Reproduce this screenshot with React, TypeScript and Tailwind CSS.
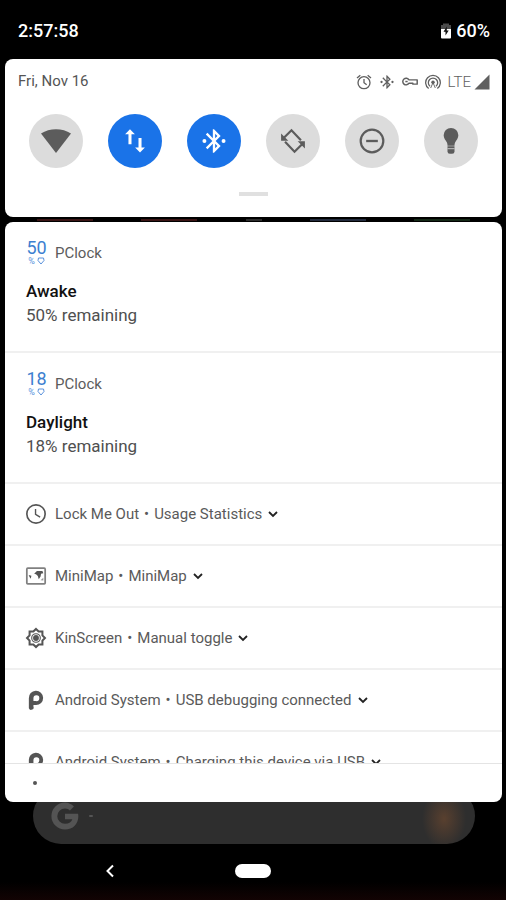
import React from "react";

type IconProps = { className?: string };

function Svg({ className = "", children, box = "0 0 24 24" }: IconProps & { children: React.ReactNode; box?: string }) {
  return (
    <svg viewBox={box} className={`shrink-0 ${className}`} fill="currentColor" aria-hidden="true">
      {children}
    </svg>
  );
}

const stroke = { fill: "none", stroke: "currentColor" } as const;

const BLUETOOTH =
  "M14.88 16.29 13 18.17v-3.76l1.88 1.88M13 5.83l1.88 1.88L13 9.59V5.83m4.71 1.88L12 2h-1v7.59L6.41 5 5 6.41 10.59 12 5 17.59 6.41 19 11 14.41V22h1l5.71-5.71-4.3-4.29 4.3-4.29";

function WifiIcon() {
  return (
    <Svg className="h-8 w-8" box="0 0 32 32">
      <path d="M1 8.500C9.500 2.700 22.500 2.700 31 8.500L16 28z" />
    </Svg>
  );
}

function DataIcon() {
  return (
    <Svg className="h-7 w-7">
      <path d="M7.700 2 3.500 6.300h2.900v8.500H9V6.300h2.900zM16.300 21.800l4.200-4.300h-2.900V9.500H15v8h-2.900z" />
    </Svg>
  );
}

function BluetoothIcon({ className = "" }: IconProps) {
  return (
    <Svg className={className}>
      <path d={BLUETOOTH} />
      <circle cx="3.800" cy="12" r="1.700" />
      <circle cx="20.200" cy="12" r="1.700" />
    </Svg>
  );
}

function RotateIcon() {
  return (
    <Svg className="h-7 w-7">
      <g {...stroke} strokeWidth="1.900">
        <path d="M18.800 11.300 10.700 2.800 4 9.500" />
        <path d="M5.200 12.700 13.300 21.200 20 14.500" />
      </g>
      <path d="M1.800 5.500v6.200H8zM22.200 18.500v-6.200H16z" />
    </Svg>
  );
}

function DndIcon() {
  return (
    <Svg className="h-7 w-7">
      <circle cx="12" cy="12" r="9.700" {...stroke} strokeWidth="1.900" />
      <path d="M7 11h10v2H7z" />
    </Svg>
  );
}

function BulbIcon() {
  return (
    <Svg className="h-7 w-7">
      <path d="M12 0.800a6.300 6.300 0 0 0-6.300 6.300c0 2.600 1.700 4.300 2.800 6.100.4.700.5 1.600.5 2.800h6c0-1.200.1-2.100.5-2.800 1.100-1.800 2.800-3.500 2.800-6.100A6.300 6.300 0 0 0 12 .8z" />
      <path d="M9 16.500h6V21a2 2 0 0 1-2 2h-2a2 2 0 0 1-2-2z" />
      <path d="M9 18.600h6" stroke="#dcdcdc" strokeWidth=".7" />
    </Svg>
  );
}

function BatteryIcon() {
  return (
    <Svg className="h-4 w-4" box="0 0 16 16">
      <path d="M5 0.500h6V2h2v4H3V2h2z" fill="#4b4b4b" />
      <path d="M3 6h10v8.500a1 1 0 0 1-1 1H4a1 1 0 0 1-1-1z" />
      <path d="M8.800 3.500 5.500 8.700h2v3.800l3.200-5H8.800z" fill="#111" />
    </Svg>
  );
}

function AlarmIcon() {
  return (
    <Svg className="h-4 w-4">
      <g {...stroke} strokeWidth="2">
        <circle cx="12" cy="13" r="9" />
        <path d="M12 7.500V13l4 3M1.500 6 6.500 1.700M22.500 6l-5-4.300" />
      </g>
    </Svg>
  );
}

function KeyIcon() {
  return (
    <Svg className="h-4 w-4">
      <g {...stroke} strokeWidth="2.200" strokeLinejoin="round">
        <path d="M10.500 8.800H22.800v6.400h-6.500v-1.400h-5.800a5 5 0 1 1 0-5z" />
        <path d="M5 11.300h3.500" />
      </g>
    </Svg>
  );
}

function HotspotIcon() {
  return (
    <Svg className="h-4 w-4">
      <g {...stroke} strokeWidth="1.900">
        <path d="M5.500 21.800A11 11 0 1 1 18.500 21.800" />
        <path d="M7.500 18.500a7 7 0 1 1 9 0" />
        <path d="M8.500 21 12 13l3.500 8" strokeWidth="1.400" />
      </g>
      <circle cx="12" cy="12.500" r="2.600" />
    </Svg>
  );
}

function SignalIcon() {
  return (
    <Svg className="h-4 w-4" box="0 0 16 16">
      <path d="M15.500 0.500v15H.5z" />
    </Svg>
  );
}

function ClockIcon() {
  return (
    <Svg className="h-[22px] w-[22px]">
      <g {...stroke}>
        <circle cx="12" cy="12" r="10" strokeWidth="1.800" />
        <path d="M11.500 6.500V12.500l5 3" strokeWidth="1.500" />
      </g>
    </Svg>
  );
}

function MapIcon() {
  return (
    <Svg className="h-[22px] w-[22px]">
      <rect x="2" y="3.500" width="20" height="17" rx="1" {...stroke} strokeWidth="1.900" opacity=".75" />
      <path d="M10 9.500 13 6.500h6l1 2.500-2.500.5-.5 3-2 3-1-3.500-2-2zM4 11l3 .8-.8 3.200-1.200-2z" />
      <path d="M17 16.500 20 14v3z" opacity=".6" />
    </Svg>
  );
}

function BrightnessIcon() {
  return (
    <Svg className="h-[22px] w-[22px]">
      <path
        d="M12 2.200 14.900 5h4.100v4.100L21.800 12 19 14.900V19h-4.100L12 21.800 9.100 19H5v-4.100L2.200 12 5 9.100V5h4.100z"
        {...stroke}
        strokeWidth="2.200"
      />
      <circle cx="12" cy="12" r="4.700" {...stroke} strokeWidth="1.200" />
      <circle cx="12" cy="12" r="3.200" />
    </Svg>
  );
}

function PieIcon() {
  return (
    <Svg className="h-[22px] w-[22px]">
      <path
        fillRule="evenodd"
        d="M4.200 10.200a7.800 7.800 0 1 1 7.800 7.300H9.200V19a2.500 2.500 0 0 1-5 2zM9.200 13.200h2.800a3.200 3.200 0 1 0-2.800-3.200z"
      />
    </Svg>
  );
}

function ChevronDown() {
  return (
    <Svg className="ml-[3px] h-4 w-4 text-[#222]" box="0 0 16 16">
      <path d="M4 6l4 4 4-4" {...stroke} strokeWidth="1.800" />
    </Svg>
  );
}

const tiles = [
  { label: "Wi-Fi", on: false, icon: <WifiIcon /> },
  { label: "Mobile data", on: true, icon: <DataIcon /> },
  { label: "Bluetooth", on: true, icon: <BluetoothIcon className="h-7 w-7" /> },
  { label: "Auto-rotate", on: false, icon: <RotateIcon /> },
  { label: "Do not disturb", on: false, icon: <DndIcon /> },
  { label: "Flashlight", on: false, icon: <BulbIcon /> },
];

const rows = [
  { app: "Lock Me Out", text: "Usage Statistics", icon: <ClockIcon /> },
  { app: "MiniMap", text: "MiniMap", icon: <MapIcon /> },
  { app: "KinScreen", text: "Manual toggle", icon: <BrightnessIcon /> },
  { app: "Android System", text: "USB debugging connected", icon: <PieIcon /> },
];

function PercentCard({ value, title }: { value: number; title: string }) {
  return (
    <article className="h-[131px] border-b-2 border-[#f0f0f0] px-[21px] pt-4">
      <div className="flex h-7 items-center gap-2">
        <div className="flex w-[21px] flex-col items-center text-[#3d7fd0]">
          <span className="text-lg leading-[18px]">{value}</span>
          <span className="flex items-center gap-0.5 text-[9px] leading-[9px] text-[#5a92dc]">
            <span>%</span>
            <Svg className="h-2 w-2" box="0 0 8 8">
              <path d="M1.500 1h5l.5 2.500-3 3.500-3-3.500z" {...stroke} />
            </Svg>
          </span>
        </div>
        <span className="pt-0.5 text-[15px] text-[#5c5c5c]">PClock</span>
      </div>
      <h2 className="mt-[13px] text-[17px] leading-6 font-medium text-[#111]">{title}</h2>
      <p className="text-[17px] leading-6 text-[#4f4f4f]">{value}% remaining</p>
    </article>
  );
}

function NotificationRow({ app, text, icon }: { app: string; text: string; icon: React.ReactNode }) {
  return (
    <button className="flex h-[62px] w-full shrink-0 items-center border-b-2 border-[#f0f0f0] px-5 text-left text-[15px] whitespace-nowrap text-[#5a5a5a]">
      <span className="mr-2 text-[#555]">{icon}</span>
      <span>{app}</span>
      <span className="mx-[5px]">•</span>
      <span>{text}</span>
      <ChevronDown />
    </button>
  );
}

export default function App() {
  return (
    <div className="min-h-screen bg-black bg-[linear-gradient(to_bottom,transparent_98%,#120303)] font-['Roboto',sans-serif]">
      <header className="flex h-[59px] items-center justify-between pt-0.5 pr-4 pl-[18px] text-lg font-medium text-white">
        <span>2:57:58</span>
        <span className="flex items-center gap-0.5">
          <BatteryIcon />
          60%
        </span>
      </header>

      <main className="pr-1 pl-[5px]">
        <section className="h-[158px] rounded-lg bg-white pt-2.5">
          <div className="flex h-6 items-center justify-between pr-3 pl-[13px]">
            <span className="text-[15px] text-[#555]">Fri, Nov 16</span>
            <span className="flex items-center gap-[7px] pt-0.5 text-[#606060]">
              <AlarmIcon />
              <BluetoothIcon className="h-4 w-4" />
              <KeyIcon />
              <HotspotIcon />
              <span className="flex items-center gap-[3px]">
                <span className="text-[15px] leading-5 font-light">LTE</span>
                <SignalIcon />
              </span>
            </span>
          </div>
          <div className="mt-[21px] flex justify-between px-6">
            {tiles.map((t) => (
              <button
                key={t.label}
                aria-label={t.label}
                aria-pressed={t.on}
                className={`flex h-[54px] w-[54px] items-center justify-center rounded-full ${
                  t.on ? "bg-[#1a73e8] text-white" : "bg-[#dcdcdc] text-[#5c5c5c]"
                }`}
              >
                {t.icon}
              </button>
            ))}
          </div>
          <div className="mx-auto mt-6 h-1 w-[29px] bg-[#e0e0e0]" />
        </section>

        <div className="flex h-[5px] items-center justify-between px-8">
          <span className="h-0.5 w-14 bg-[#3a1414]" />
          <span className="h-0.5 w-14 bg-[#3a1414]" />
          <span className="h-0.5 w-4 bg-[#2c2c2c]" />
          <span className="h-0.5 w-14 bg-[#222a3c]" />
          <span className="h-0.5 w-14 bg-[#142816]" />
        </div>

        <section className="relative z-10 rounded-lg bg-white">
          <PercentCard value={50} title="Awake" />
          <PercentCard value={18} title="Daylight" />
          {rows.map((r) => (
            <NotificationRow key={r.text} {...r} />
          ))}
          <div className="h-[31px] overflow-hidden">
            <NotificationRow app="Android System" text="Charging this device via USB" icon={<PieIcon />} />
          </div>
          <div className="flex h-[39px] items-center border-t border-[#e4e4e4] pl-7">
            <span className="h-1 w-1 rounded-full bg-[#555]" />
          </div>
        </section>
      </main>

      <div className="-mt-3.5 mr-[31px] ml-[33px] flex h-14 items-center rounded-full bg-[#2e2e2e] bg-[radial-gradient(ellipse_22px_30px_at_93%_55%,#59402f,transparent)] px-4 text-[#545454]">
        <Svg className="h-8 w-8">
          <path d="M12 6.300c1.700 0 2.900.7 3.700 1.500l3-3A10.300 10.300 0 0 0 12 1.800 10.200 10.200 0 1 0 12 22.200c6 0 10-4.200 10-10 0-.8-.1-1.300-.2-1.900H12v4.100h5.500c-.5 2-2.400 3.500-5.500 3.500a5.800 5.800 0 0 1 0-11.600z" />
        </Svg>
        <span className="ml-2 h-0.5 w-1 rounded-full bg-current" />
      </div>

      <nav className="grid h-[54px] grid-cols-3 place-items-center px-[38px]">
        <button aria-label="Back" className="text-white">
          <Svg className="h-4 w-4" box="0 0 16 16">
            <path d="M11 2.500 5.500 8l5.500 5.500" {...stroke} strokeWidth="2" />
          </Svg>
        </button>
        <button aria-label="Home" className="h-3.5 w-9 rounded-full bg-white" />
      </nav>
    </div>
  );
}
